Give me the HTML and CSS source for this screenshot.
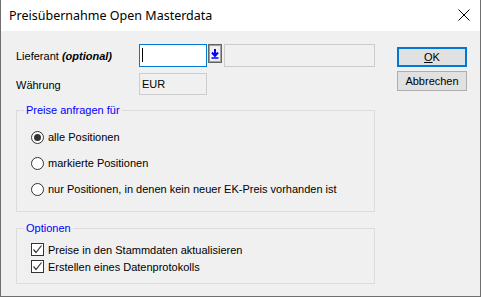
FILE: index.html
```html
<!DOCTYPE html>
<html>
<head>
    <meta charset="utf-8">
    <link rel="stylesheet" href="styles.css">
</head>
<body>
    <div class="window">
        <div class="titlebar">
            <span class="title">Preisübernahme Open Masterdata</span>
            <svg class="close" width="12" height="12" viewBox="0 0 12 12">
                <path d="M0.5 0.5 L11.5 11.5 M11.5 0.5 L0.5 11.5" stroke="#000" stroke-width="1" fill="none" />
            </svg>
        </div>

        <div class="content">
            <div class="left">
                <div class="row row-first">
                    <span class="label">Lieferant <i class="opt">(optional)</i></span>
                    <span class="field active"><span class="caret"></span></span>
                    <span class="pick">
                        <svg width="8" height="11" viewBox="0 0 8 11">
                            <path d="M4 1 V7 M1 4.5 L4 8 L7 4.5" stroke="#0000ff" stroke-width="2" fill="none" />
                            <path d="M0.5 10 H7.5" stroke="#0000ff" stroke-width="1.5" />
                        </svg>
                    </span>
                    <span class="field wide"></span>
                </div>
                <div class="row row-second">
                    <span class="label">Währung</span>
                    <span class="field ro">EUR</span>
                </div>

                <fieldset class="group group-prices">
                    <legend>Preise anfragen für</legend>
                    <div class="radio-row"><span class="radio checked"></span>alle Positionen</div>
                    <div class="radio-row"><span class="radio"></span>markierte Positionen</div>
                    <div class="radio-row"><span class="radio"></span>nur Positionen, in denen kein neuer EK-Preis vorhanden ist</div>
                </fieldset>

                <fieldset class="group group-options">
                    <legend>Optionen</legend>
                    <div class="check-row">
                        <span class="check"><svg width="11" height="11" viewBox="0 0 11 11"><path d="M1.5 5.5 L4 8.5 L9.5 1.5" stroke="#333" stroke-width="1.2" fill="none" /></svg></span>
                        Preise in den Stammdaten aktualisieren
                    </div>
                    <div class="check-row">
                        <span class="check"><svg width="11" height="11" viewBox="0 0 11 11"><path d="M1.5 5.5 L4 8.5 L9.5 1.5" stroke="#333" stroke-width="1.2" fill="none" /></svg></span>
                        Erstellen eines Datenprotokolls
                    </div>
                </fieldset>
            </div>

            <div class="right">
                <button class="button default" type="button"><u>O</u>K</button>
                <button class="button" type="button">Abbrechen</button>
            </div>
        </div>
    </div>
</body>
</html>
```

FILE: styles.css
```css
body {
    margin: 0;
    font-family: "Liberation Sans", Arial, sans-serif;
    font-size: 11px;
    color: #000;
    background-color: #f0f0f0;
}

.window {
    width: 481px;
    height: 297px;
    box-sizing: border-box;
    border: 1px solid #6f6f6f;
    border-top: none;
    background-color: #f0f0f0;
    display: flex;
    flex-direction: column;
}

.titlebar {
    height: 31px;
    background-color: white;
    display: flex;
    align-items: center;
    justify-content: space-between;
    padding: 0 10px 0 8px;
}

.title {
    font-family: "Noto Sans", "Open Sans", sans-serif;
    font-size: 12.5px;
    margin-top: -1px;
}

.close {
    margin-top: -1px;
}

.content {
    flex: 1;
    display: flex;
    padding: 13px 0 0 15px;
}

.left {
    width: 359px;
}

.row {
    display: flex;
    align-items: flex-start;
}

.row-second {
    margin-top: 6px;
}

.label {
    width: 123px;
    line-height: 14px;
    padding-top: 5px;
}

.opt {
    font-weight: bold;
}

.field {
    box-sizing: border-box;
    height: 23px;
    width: 68px;
    border: 1px solid #cccccc;
    background-color: #f0f0f0;
    padding: 3px 2px;
    line-height: 15px;
}

.field.active {
    border-color: #0078d7;
    background-color: white;
}

.caret {
    display: block;
    width: 1px;
    height: 14px;
    background-color: black;
}

.field.ro {
    height: 22px;
    line-height: 14px;
}

.pick {
    box-sizing: border-box;
    width: 14px;
    height: 19px;
    margin-left: 1px;
    border: 1px solid #646464;
    box-shadow: inset 0 0 0 1px #a0a0a0;
    display: flex;
    align-items: center;
    justify-content: center;
}

.field.wide {
    width: 151px;
    margin-left: 2px;
}

.group {
    margin: 8px 0 0 0;
    padding: 0 0 0 14px;
    border: 1px solid #dcdcdc;
    min-width: 0;
}

.group legend {
    color: #0000ff;
    padding: 0 2px;
    margin-left: -7px;
    line-height: 14px;
}

.group-prices {
    height: 109px;
    box-sizing: border-box;
    padding-top: 7px;
}

.group-options {
    margin-top: 9px;
    height: 63px;
    box-sizing: border-box;
    padding-top: 6px;
}

.radio-row {
    height: 26px;
    display: flex;
    align-items: center;
}

.radio {
    box-sizing: border-box;
    width: 13px;
    height: 13px;
    border: 1px solid #333;
    border-radius: 50%;
    background-color: white;
    margin-right: 4px;
    display: flex;
    align-items: center;
    justify-content: center;
}

.radio.checked::after {
    content: "";
    width: 7px;
    height: 7px;
    border-radius: 50%;
    background-color: #333;
}

.check-row {
    height: 17px;
    display: flex;
    align-items: center;
}

.check {
    box-sizing: border-box;
    width: 13px;
    height: 13px;
    border: 1px solid #333;
    background-color: white;
    margin-right: 4px;
    display: flex;
    align-items: center;
    justify-content: center;
}

.right {
    margin-left: 22px;
    padding-top: 3px;
    display: flex;
    flex-direction: column;
    gap: 4px;
}

.button {
    box-sizing: border-box;
    width: 70px;
    height: 20px;
    font-family: "Liberation Sans", Arial, sans-serif;
    font-size: 11px;
    padding: 0;
    border: 1px solid #adadad;
    background-color: #e1e1e1;
    color: black;
}

.button.default {
    border: 2px solid #0078d7;
}
```
